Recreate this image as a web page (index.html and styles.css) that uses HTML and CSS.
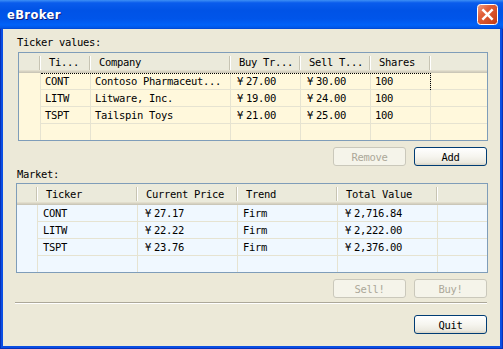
FILE: index.html
```html
<!DOCTYPE html>
<html lang="en">
<head>
  <meta charset="utf-8" />
  <title>eBroker</title>
  <link rel="stylesheet" href="styles.css">
</head>
<body>
  <div class="window">
    <header class="titlebar">
      <span class="title">eBroker</span>
      <button class="close" aria-label="Close">
        <svg width="21" height="21" viewBox="0 0 21 21">
          <defs>
            <linearGradient id="closeFill" x1="0" y1="0" x2="1" y2="1">
              <stop offset="0" stop-color="#f2a287"/>
              <stop offset=".35" stop-color="#e2603a"/>
              <stop offset="1" stop-color="#c23a12"/>
            </linearGradient>
          </defs>
          <rect x=".5" y=".5" width="20" height="20" rx="3" fill="url(#closeFill)" stroke="#fff"/>
          <path d="M6.2 6.2 L14.8 14.8 M14.8 6.2 L6.2 14.8" stroke="#fff" stroke-width="2.4" stroke-linecap="square"/>
        </svg>
      </button>
    </header>

    <main class="client">
      <div class="label label-ticker">Ticker values:</div>
      <div class="grid ticker">
        <div class="row head">
          <div class="cell rh"></div><div class="cell">Ti...</div><div class="cell">Company</div><div class="cell">Buy Tr...</div><div class="cell">Sell T...</div><div class="cell">Shares</div><div class="cell fill"></div>
        </div>
        <div class="row sel">
          <div class="cell rh"></div><div class="cell">CONT</div><div class="cell">Contoso Pharmaceut...</div><div class="cell"><span class="y">¥</span>27.00</div><div class="cell"><span class="y">¥</span>30.00</div><div class="cell">100</div><div class="cell fill"></div>
        </div>
        <div class="row">
          <div class="cell rh"></div><div class="cell">LITW</div><div class="cell">Litware, Inc.</div><div class="cell"><span class="y">¥</span>19.00</div><div class="cell"><span class="y">¥</span>24.00</div><div class="cell">100</div><div class="cell fill"></div>
        </div>
        <div class="row">
          <div class="cell rh"></div><div class="cell">TSPT</div><div class="cell">Tailspin Toys</div><div class="cell"><span class="y">¥</span>21.00</div><div class="cell"><span class="y">¥</span>25.00</div><div class="cell">100</div><div class="cell fill"></div>
        </div>
        <div class="row">
          <div class="cell rh"></div><div class="cell"></div><div class="cell"></div><div class="cell"></div><div class="cell"></div><div class="cell"></div><div class="cell fill"></div>
        </div>
      </div>

      <div class="actions actions-ticker">
        <button class="btn" disabled>Remove</button>
        <button class="btn">Add</button>
      </div>

      <div class="label label-market">Market:</div>
      <div class="grid market">
        <div class="row head">
          <div class="cell rh"></div><div class="cell">Ticker</div><div class="cell">Current Price</div><div class="cell">Trend</div><div class="cell">Total Value</div><div class="cell fill"></div>
        </div>
        <div class="row">
          <div class="cell rh"></div><div class="cell">CONT</div><div class="cell"><span class="y">¥</span>27.17</div><div class="cell">Firm</div><div class="cell"><span class="y">¥</span>2,716.84</div><div class="cell fill"></div>
        </div>
        <div class="row">
          <div class="cell rh"></div><div class="cell">LITW</div><div class="cell"><span class="y">¥</span>22.22</div><div class="cell">Firm</div><div class="cell"><span class="y">¥</span>2,222.00</div><div class="cell fill"></div>
        </div>
        <div class="row">
          <div class="cell rh"></div><div class="cell">TSPT</div><div class="cell"><span class="y">¥</span>23.76</div><div class="cell">Firm</div><div class="cell"><span class="y">¥</span>2,376.00</div><div class="cell fill"></div>
        </div>
        <div class="row">
          <div class="cell rh"></div><div class="cell"></div><div class="cell"></div><div class="cell"></div><div class="cell"></div><div class="cell fill"></div>
        </div>
      </div>

      <div class="actions actions-market">
        <button class="btn" disabled>Sell!</button>
        <button class="btn" disabled>Buy!</button>
      </div>

      <hr class="sep">

      <div class="actions actions-quit">
        <button class="btn">Quit</button>
      </div>
    </main>
  </div>
</body>
</html>
```

FILE: styles.css
```css
:root{
  --face:#ece9d8;
  --frame:#0a4ee3;
  --gridline:#e6e3d1;
  --listborder:#7f9db9;
  --mono:"DejaVu Sans Mono", "Liberation Mono", monospace;
}

* { box-sizing: border-box; }

body{ margin:0; background:#fff; font-family: var(--mono); }

.window{
  width:503px; height:349px;
  display:flex; flex-direction:column;
  background: var(--frame);
  box-shadow: inset 0 0 0 1px #0831b8;
}

/* caption */
.titlebar{
  flex:none; height:29px;
  display:flex; align-items:center; justify-content:space-between;
  padding:0 5px 0 7px;
  background: linear-gradient(180deg, #3d8ff5 0, #0a5cec 10%, #0053e6 35%, #0055ea 65%, #0062f8 86%, #0057e8 95%, #0046d0 100%);
}
.title{
  font: bold 11.5px "DejaVu Sans", sans-serif; letter-spacing:.4px;
  color:#fff; text-shadow: 1px 1px 0 #0b1f7e;
}
.close{ width:21px; height:21px; padding:0; border:0; background:none; display:block; }
.close svg{ display:block; }

/* dialog body */
.client{
  flex:1; margin:0 3px 3px;
  display:flex; flex-direction:column;
  background: var(--face); color:#000;
  font-size:10.5px; letter-spacing:-.32px;
}

.label{ line-height:12px; margin-left:14px; white-space:nowrap; }
.label-ticker{ margin-top:7px; }
.label-market{ margin-top:2px; }

/* list views */
.grid{ border:1px solid var(--listborder); overflow:hidden; flex:none; }
.ticker{ margin:4px 0 0 15px; width:470px; height:89px; background:#fff8dc; }
.market{ margin:3px 0 0 13px; width:472px; height:90px; background:#f0f8ff; }

.row{ display:grid; height:17px; position:relative; }
.ticker .row{ grid-template-columns: 22px 50px 140px 70px 70px 60px 1fr; }
.market .row{ grid-template-columns: 21px 100px 100px 100px 100px 1fr; }

.cell{
  padding-left:5px; line-height:16px; white-space:nowrap; overflow:hidden;
  border-right:1px solid var(--gridline); border-bottom:1px solid var(--gridline);
}
.ticker .cell{ padding-left:4px; }
.cell.rh{ border-bottom:0; }
.cell.fill{ border-right:0; }

.row.head{
  height:20px;
  background: linear-gradient(180deg, #ebeadb 0, #ebeadb calc(100% - 3px), #e2decd calc(100% - 3px), #e2decd calc(100% - 2px), #d6d2c2 calc(100% - 2px), #d6d2c2 calc(100% - 1px), #cbc7b8 calc(100% - 1px));
}
.market .row.head{ height:21px; }
.head .cell{
  border:0; padding-left:8px; line-height:19px;
  background:
    linear-gradient(#c7c4b3, #c7c4b3) right 1px top 3px / 1px 14px no-repeat,
    linear-gradient(#fff, #fff) right 0 top 3px / 1px 14px no-repeat;
}
.market .head .cell{ line-height:20px; }
.head .cell.fill{ background:none; }

/* focus rectangle of the current item */
.row.sel::after{
  content:''; position:absolute; left:22px; top:0; width:389px; height:16px;
  border-top:1px dotted #000; border-right:1px dotted #000;
}

.y{ margin:0 3px 0 2px; }

/* buttons */
.actions{ display:flex; justify-content:flex-end; gap:8px; padding-right:13px; flex:none; }
.actions-ticker{ margin-top:6px; }
.actions-market{ margin-top:6px; }
.actions-quit{ margin-top:11px; }

.btn{
  width:73px; height:19px; padding:0;
  font: 10.5px var(--mono); letter-spacing:-.32px; color:#000;
  border:1px solid #003c74; border-radius:3px;
  background: linear-gradient(180deg, #ffffff 0, #f6f5ef 50%, #ebe9df 85%, #d8d4c6 100%);
}
.btn:disabled{
  color:#aca899; border-color:#cac8bb;
  background:#f5f4ea;
}

.sep{
  margin:4px 13px 0 12px; height:2px; border:0;
  border-top:1px solid #aca899; border-bottom:1px solid #fff;
}
```
